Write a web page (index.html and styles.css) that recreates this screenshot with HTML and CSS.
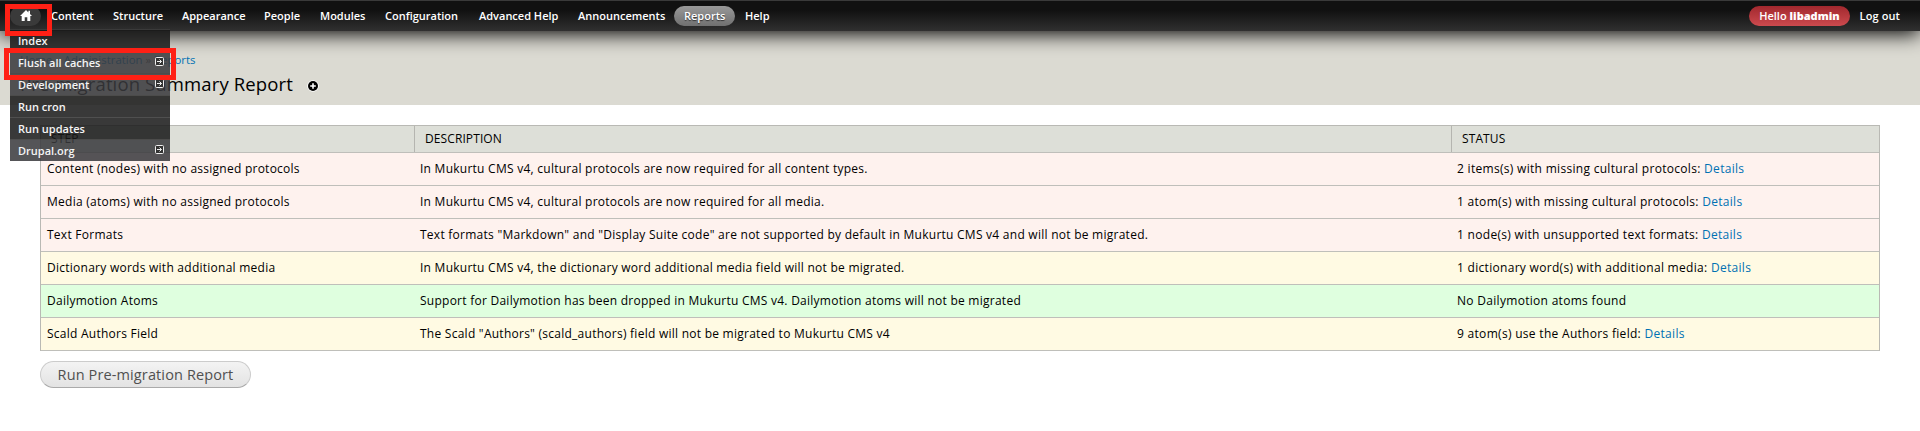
FILE: index.html
```html
<!DOCTYPE html>
<html lang="en">
<head>
<meta charset="utf-8">
<title>Pre-migration Summary Report</title>
<link rel="stylesheet" href="styles.css">
</head>
<body>
<nav class="toolbar">
  <a class="home" href="#"><svg width="12" height="11" viewBox="0 0 12 11"><path d="M6 0 0 6h1.700v5h3V7.300h2.600V11h3V6H12L10 4V.8H8.400V2.400z" fill="#fff"/></svg></a>
  <a class="item content" href="#">Content</a>
  <a class="item structure" href="#">Structure</a>
  <a class="item appearance" href="#">Appearance</a>
  <a class="item people" href="#">People</a>
  <a class="item modules" href="#">Modules</a>
  <a class="item configuration" href="#">Configuration</a>
  <a class="item advanced" href="#">Advanced Help</a>
  <a class="item announcements" href="#">Announcements</a>
  <a class="item reports" href="#">Reports</a>
  <a class="item help" href="#">Help</a>
  <span class="account"><a class="hello" href="#"><span>Hello</span> <b>libadmin</b></a><a class="logout" href="#">Log out</a></span>
  <ul class="menu">
    <li class="index">Index</li>
    <li class="sub flush">Flush all caches<svg class="arrow" width="9" height="9" viewBox="0 0 9 9"><rect x=".5" y=".5" width="8" height="8" rx="1"/><path d="M2 4.500h4.500M4.500 2.500l2 2-2 2"/></svg></li>
    <li class="sub dev">Development<svg class="arrow" width="9" height="9" viewBox="0 0 9 9"><rect x=".5" y=".5" width="8" height="8" rx="1"/><path d="M2 4.500h4.500M4.500 2.500l2 2-2 2"/></svg></li>
    <li class="cron">Run cron</li>
    <li class="updates">Run updates</li>
    <li class="sub org">Drupal.org<svg class="arrow" width="9" height="9" viewBox="0 0 9 9"><rect x=".5" y=".5" width="8" height="8" rx="1"/><path d="M2 4.500h4.500M4.500 2.500l2 2-2 2"/></svg></li>
  </ul>
  <span class="mark mark-home"></span>
  <span class="mark mark-flush"></span>
</nav>
<header class="branding">
  <div class="crumbs"><a href="#">Home</a> » <a href="#">Administration</a> » <a href="#">Reports</a></div>
  <div class="heading"><h1>Pre-migration Summary Report</h1><svg width="12" height="12" viewBox="0 0 12 12"><circle cx="6" cy="6" r="5.800" fill="#fff"/><circle cx="6" cy="6" r="5" fill="#000"/><path d="M6 3.200v5.600M3.200 6h5.600" stroke="#fff" stroke-width="1.600"/></svg></div>
</header>
<main class="page">
  <div class="report">
    <div class="row head"><div>STEP</div><div>DESCRIPTION</div><div>STATUS</div></div>
    <div class="row error"><div>Content (nodes) with no assigned protocols</div><div>In Mukurtu CMS v4, cultural protocols are now required for all content types.</div><div>2 items(s) with missing cultural protocols: <a href="#">Details</a></div></div>
    <div class="row error"><div>Media (atoms) with no assigned protocols</div><div>In Mukurtu CMS v4, cultural protocols are now required for all media.</div><div>1 atom(s) with missing cultural protocols: <a href="#">Details</a></div></div>
    <div class="row error"><div>Text Formats</div><div>Text formats "Markdown" and "Display Suite code" are not supported by default in Mukurtu CMS v4 and will not be migrated.</div><div>1 node(s) with unsupported text formats: <a href="#">Details</a></div></div>
    <div class="row warning"><div>Dictionary words with additional media</div><div>In Mukurtu CMS v4, the dictionary word additional media field will not be migrated.</div><div>1 dictionary word(s) with additional media: <a href="#">Details</a></div></div>
    <div class="row ok"><div>Dailymotion Atoms</div><div>Support for Dailymotion has been dropped in Mukurtu CMS v4. Dailymotion atoms will not be migrated</div><div>No Dailymotion atoms found</div></div>
    <div class="row warning"><div>Scald Authors Field</div><div>The Scald "Authors" (scald_authors) field will not be migrated to Mukurtu CMS v4</div><div>9 atom(s) use the Authors field: <a href="#">Details</a></div></div>
  </div>
  <button class="run">Run Pre-migration Report</button>
</main>
</body>
</html>
```
FILE: styles.css
```css
* { box-sizing: border-box; }
body {
  margin: 0;
  background: #fff;
  color: #000;
  font: 13px/18px "Open Sans", "Noto Sans", sans-serif;
}
a { color: #0071b3; text-decoration: none; }

/* Top toolbar */
.toolbar {
  position: relative;
  z-index: 2;
  display: flex;
  align-items: center;
  height: 31px;
  padding-left: 10px;
  border-top: 1px solid #3a3a3a;
  background: linear-gradient(#111 0, #111 30%, #303030);
  box-shadow: 0 3px 20px #000;
  font-size: 11px;
  font-weight: 600;
}
.toolbar a { color: #fff; }
.home {
  display: flex;
  align-items: center;
  justify-content: center;
  width: 31px;
  height: 20px;
  padding-bottom: 2px;
  border-radius: 10px;
  background: #3a3a3a;
}
.item, .hello {
  height: 20px;
  line-height: 19px;
  padding: 0 10px;
  border-radius: 10px;
  white-space: nowrap;
}
.content { width: 62px; }
.structure { width: 69px; }
.appearance { width: 82px; }
.people { width: 56px; }
.modules { width: 65px; }
.configuration { width: 94px; }
.advanced { width: 99px; }
.announcements { width: 106px; }
.reports { width: 61px; background: linear-gradient(#999, #707070); text-shadow: 0 1px 1px #333; }
.account { display: flex; gap: 10px; margin-left: auto; padding-right: 20px; }
.hello { background: linear-gradient(#a2282e, #cc4a4e); }
.logout { line-height: 19px; letter-spacing: .1px; }

/* Drop-down menu */
.menu {
  position: absolute;
  top: 28px;
  left: 10px;
  width: 160px;
  height: 132px;
  margin: 0;
  padding: 0;
  list-style: none;
  color: #f4f4f4;
}
.menu li {
  display: flex;
  align-items: center;
  justify-content: space-between;
  height: 22px;
  padding: 0 6px 0 8px;
  background: rgba(24, 24, 24, .86);
  background-clip: padding-box;
  border-top: 1px solid rgba(60, 60, 60, .9);
}
.menu .sub { background-color: rgba(57, 57, 60, .86); }
.arrow { margin-bottom: 2px; fill: #333; stroke: #eee; stroke-width: 1; }
.mark { position: absolute; border: 5px solid #ff2015; }
.mark-home { left: 5px; top: 3px; width: 47px; height: 32px; }
.mark-flush { left: 4px; top: 47px; width: 172px; height: 32px; }

/* Page header */
.branding {
  height: 74px;
  padding: 20px 0 0 20px;
  background: #dbdad2;
}
.crumbs { height: 18px; font-size: 11.4px; color: #555; }
.heading { display: flex; align-items: center; gap: 14px; margin-top: 3px; }
.heading h1 { margin: 0; font-size: 18.5px; font-weight: 400; line-height: 24px; letter-spacing: .13px; }
.heading svg { margin-top: 4px; }

/* Report table */
.page { padding: 20px 40px; }
.report { border: 1px solid #b9b9b4; border-bottom: 0; font-size: 12px; letter-spacing: .255px; }
.row {
  display: grid;
  grid-template-columns: 373px 1037px 1fr;
  align-items: center;
  height: 33px;
  border-bottom: 1px solid #bfbfba;
}
.row > div { padding-left: 6px; white-space: nowrap; }
.row > div:last-child { letter-spacing: .3px; }
.row.head { height: 27px; background: #dddfd8; }
.row.head > div { padding-left: 10px; line-height: 26px; letter-spacing: .1px; border-left: 1px solid #b5b5b0; }
.row.head > div:first-child { border-left: 0; }
.error { background: #fef2ee; }
.warning { background: #fffae3; }
.ok { background: #dfffdf; }
.run {
  display: block;
  width: 211px;
  height: 27px;
  margin-top: 10px;
  padding: 0;
  border: 1px solid #ccc;
  border-bottom-color: #aaa;
  border-radius: 14px;
  background: linear-gradient(#f3f3f3, #e3e3e3);
  color: #505050;
  font: 14.5px/24px "Open Sans", "Noto Sans", sans-serif;
  letter-spacing: .12px;
}
```
